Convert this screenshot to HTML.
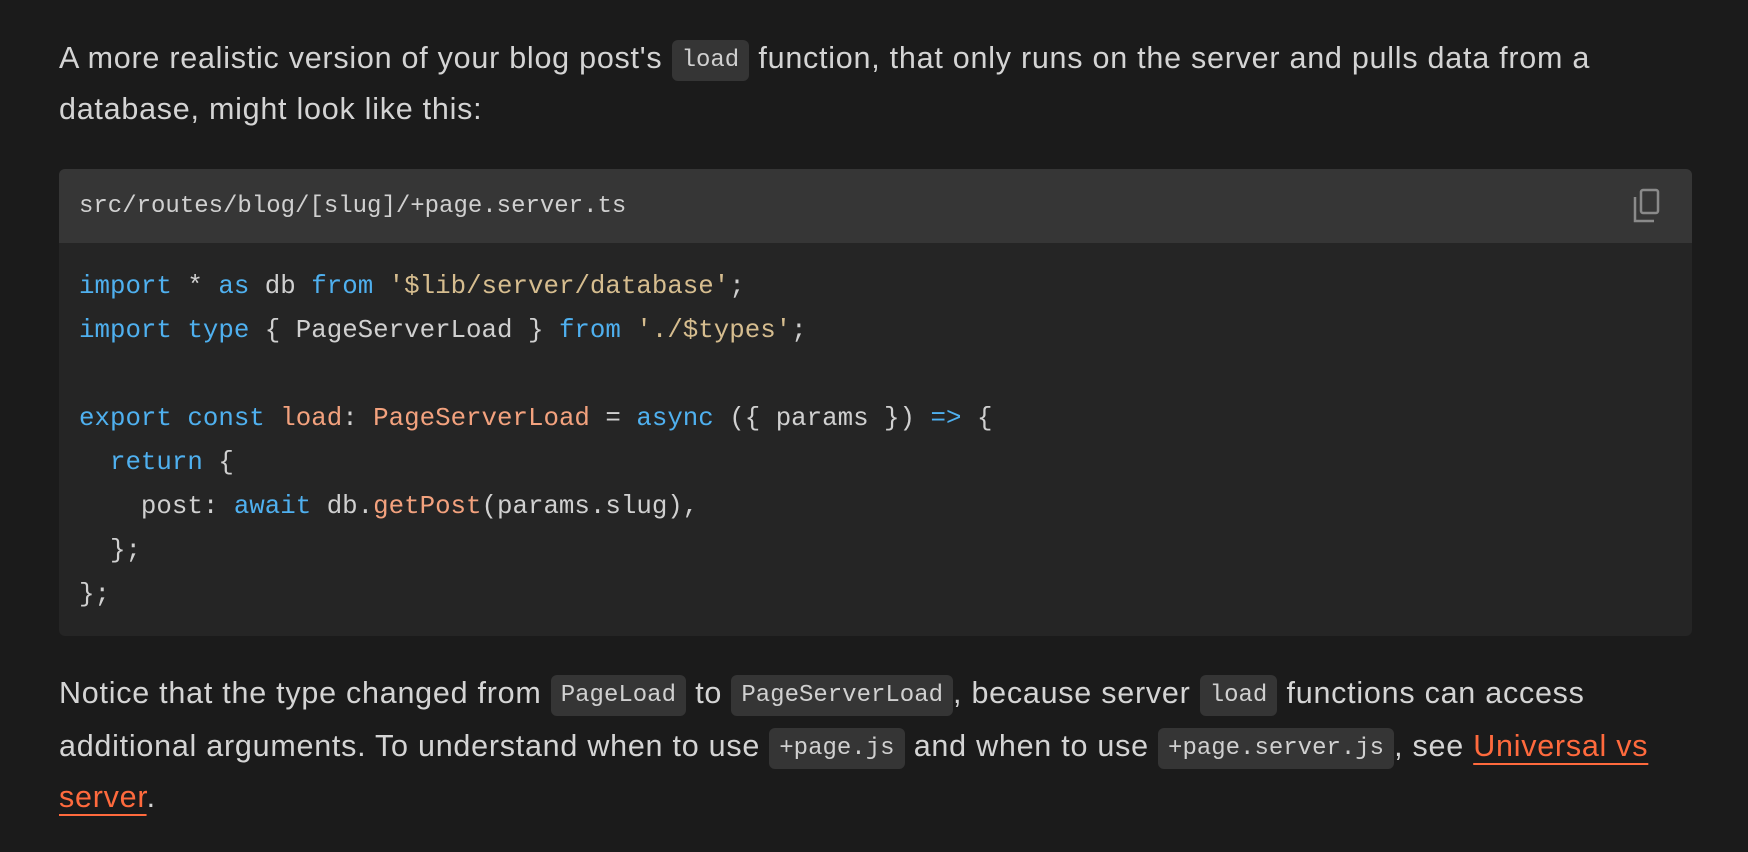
<!DOCTYPE html>
<html><head><meta charset="utf-8"><style>
body{margin:0;width:1748px;height:852px;background:#1b1b1b;overflow:hidden;font-family:"Liberation Sans",sans-serif;color:#d4d4d4}
.l{position:absolute;left:59px;white-space:nowrap;font-size:30.5px;line-height:52px;letter-spacing:0.75px}
code{font-family:"Liberation Mono",monospace;font-size:24px;background:#353535;border-radius:6px;padding:7px 10px;color:#d0d0d0;letter-spacing:0;vertical-align:2px}
a{color:#ff6a3d;text-decoration:underline;text-underline-offset:7px;text-decoration-thickness:2px}
.blk{position:absolute;left:59px;top:169px;width:1633px;height:467px;background:#252525;border-radius:6px;overflow:hidden}
.hd{height:74px;background:#363636;font-family:"Liberation Mono",monospace;font-size:24px;line-height:76px;padding-left:20px;color:#d0d0d0}
pre{margin:0;position:absolute;left:20px;top:96px;font-family:"Liberation Mono",monospace;font-size:25.8px;line-height:44px;color:#d0d0d0}
.k{color:#4fb0ef}.s{color:#d6bd8f}.f{color:#f3a27e}
</style></head><body>
<div class="l" style="top:32px">A more realistic version of your blog post's <code>load</code> function, that only runs on the server and pulls data from a</div>
<div class="l" style="top:83px">database, might look like this:</div>
<div class="blk"><div class="hd">src/routes/blog/[slug]/+page.server.ts</div>
<svg style="position:absolute;left:1572px;top:16px" width="34" height="40" viewBox="0 0 34 40"><rect x="10" y="5" width="17" height="23" rx="2" fill="none" stroke="#8a8a8a" stroke-width="2.5"/><path d="M4 12V36H23" fill="none" stroke="#8a8a8a" stroke-width="2.5"/></svg>
<pre><span class="k">import</span> * <span class="k">as</span> db <span class="k">from</span> <span class="s">'$lib/server/database'</span>;
<span class="k">import</span> <span class="k">type</span> { PageServerLoad } <span class="k">from</span> <span class="s">'./$types'</span>;

<span class="k">export</span> <span class="k">const</span> <span class="f">load</span>: <span class="f">PageServerLoad</span> = <span class="k">async</span> ({ params }) <span class="k">=&gt;</span> {
  <span class="k">return</span> {
    post: <span class="k">await</span> db.<span class="f">getPost</span>(params.slug),
  };
};</pre></div>
<div class="l" style="top:667px">Notice that the type changed from <code>PageLoad</code> to <code>PageServerLoad</code>, because server <code>load</code> functions can access</div>
<div class="l" style="top:720px">additional arguments. To understand when to use <code>+page.js</code> and when to use <code>+page.server.js</code>, see <a>Universal vs</a></div>
<div class="l" style="top:771px"><a>server</a>.</div>
</body></html>
